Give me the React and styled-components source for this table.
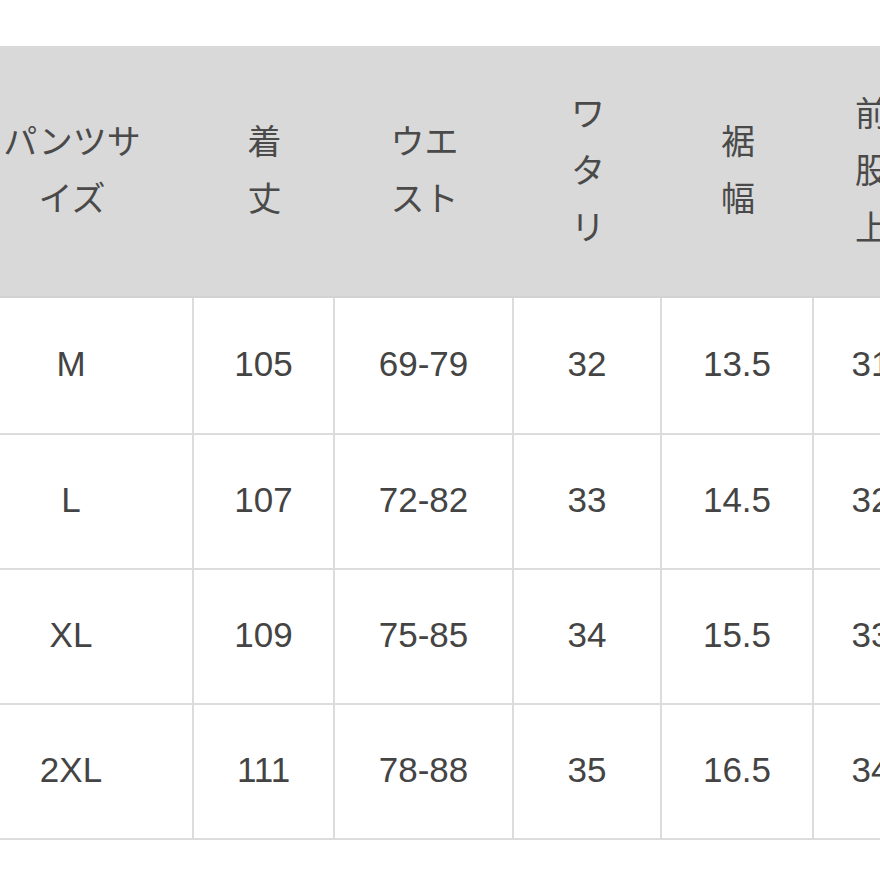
import React from 'react';
import styled, { createGlobalStyle } from 'styled-components';

const GlobalStyle = createGlobalStyle`
  html, body {
    margin: 0;
    padding: 0;
    background: #ffffff;
  }
`;

const Page = styled.div`
  width: 880px;
  height: 880px;
  overflow: hidden;
  padding-top: 46px;
  box-sizing: border-box;
  background: #fff;
  font-family: "Liberation Sans", "Noto Sans CJK JP", sans-serif;
  color: #444;
`;

const Table = styled.div`
  display: grid;
  grid-template-columns: 244px 141px 179px 148px 152px 116px;
  grid-template-rows: 252px 137px repeat(3, 135px);
  margin-left: -50px;
  width: max-content;
`;

const HeadCell = styled.div`
  background: #d9d9d9;
  border-bottom: 2px solid #d2d2d2;
  display: flex;
  align-items: center;
  justify-content: center;
  flex-direction: column;
  font-size: 34px;
  line-height: 57px;
  text-align: center;
  color: #4a4a4a;
  box-sizing: border-box;
`;

const Cell = styled.div`
  border-bottom: 2px solid #dcdcdc;
  border-right: 2px solid #dcdcdc;
  display: flex;
  align-items: center;
  justify-content: center;
  font-size: 35px;
  box-sizing: border-box;
  padding-bottom: 4px;
`;

const headers = [
  ['パンツサ', 'イズ'],
  ['着', '丈'],
  ['ウエ', 'スト'],
  ['ワ', 'タ', 'リ'],
  ['裾', '幅'],
  ['前', '股', '上'],
];

const rows = [
  ['M', '105', '69-79', '32', '13.5', '31'],
  ['L', '107', '72-82', '33', '14.5', '32'],
  ['XL', '109', '75-85', '34', '15.5', '33'],
  ['2XL', '111', '78-88', '35', '16.5', '34'],
];

export default function App() {
  return (
    <>
      <GlobalStyle />
      <Page>
        <Table>
          {headers.map((lines, i) => (
            <HeadCell key={'h' + i}>
              {lines.map((l, j) => (
                <span key={j}>{l}</span>
              ))}
            </HeadCell>
          ))}
          {rows.map((row, r) =>
            row.map((v, c) => <Cell key={r + '-' + c}>{v}</Cell>)
          )}
        </Table>
      </Page>
    </>
  );
}
